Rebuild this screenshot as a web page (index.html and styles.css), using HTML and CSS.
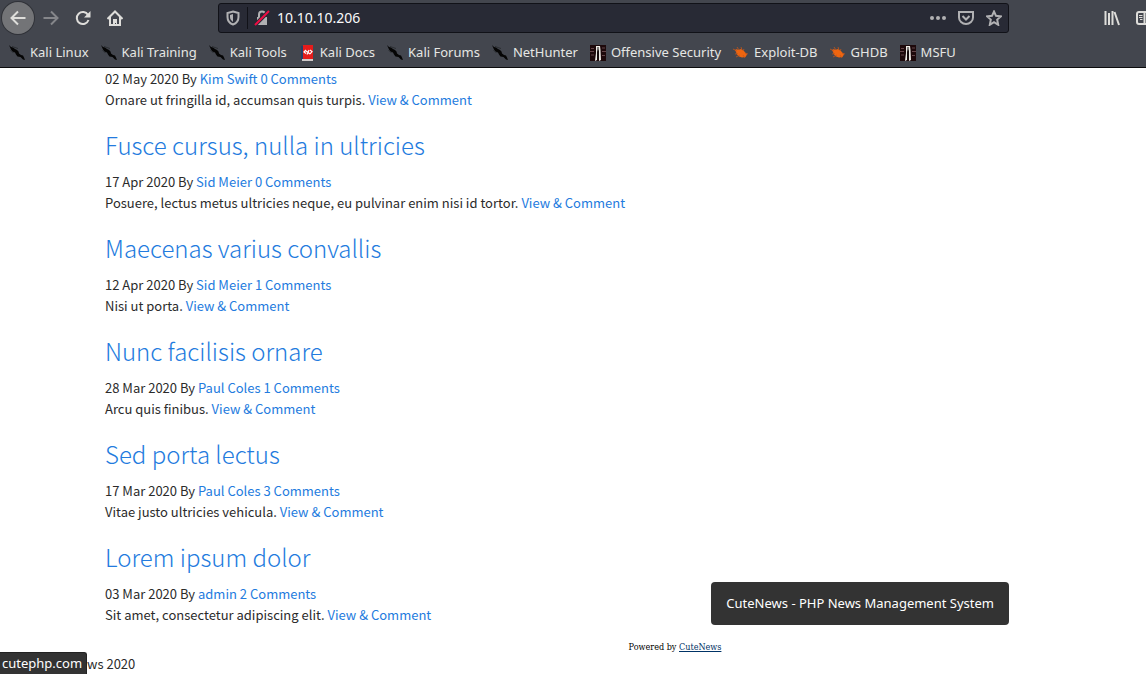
FILE: index.html
```
<!DOCTYPE html>
<html lang="en">
<head>
<meta charset="utf-8">
<title>CuteNews</title>
<link rel="stylesheet" href="styles.css">
</head>
<body>
<svg class="defs" aria-hidden="true">
  <symbol id="kali" viewBox="0 0 16 16"><path fill="#050505" d="M0 0l2 2 2 .5 2 1.500 2 1 1.500 1.500.5 2 2 1.500 2 .5 1 2 1 2.500-2-.5-2.500-2.500-3-.5L7 9.500 6 7.500 3.500 6.500 2 4.500z"/><path stroke="#26282c" stroke-width=".8" d="M3 1.500l6 2M1.500 5l3 3"/></symbol>
  <symbol id="offsec" viewBox="0 0 16 16"><path fill="#1d090b" d="M0 0h16v16H0z"/><path stroke="#65464a" stroke-width="1" d="M1 3.500h3M0 6.500h4M1 10h3M12 3h3M12 6.500h4M12 10.500h3"/><path fill="#eeeae5" d="M6 1h4l.5 4 .5 10-2 1V6L8 4 7 7v8l-2 1 1-8z"/><path fill="#111" d="M7.500 2h1v12h-1z"/></symbol>
  <symbol id="bug" viewBox="0 0 16 16"><path fill="#ee6510" d="M2 5l2-1 1 1 3-1 3 2 1.500 2L14 9.500 12.500 12 9 12.500 6 11.500 4 9.500 3 7z"/><path stroke="#c75719" stroke-width=".8" d="M0 4l4 2M4 2l2 3M8 2l1 3M2 9l3-.5M3 12l4-2M12 13l-2-3M11 4l-1 2M12 8l3 1"/></symbol>
</svg>
<header class="chrome">
  <nav class="toolbar" aria-label="Navigation">
    <div class="tools">
      <button class="tool back" aria-label="Back"><svg viewBox="0 0 16 16"><path d="M15.500 8H1.500M8 1.500L1.500 8 8 14.500"/></svg></button>
      <button class="tool dim" aria-label="Forward"><svg viewBox="0 0 16 16"><path d="M.5 8h14M8 1.500L14.500 8 8 14.500"/></svg></button>
      <button class="tool" aria-label="Reload"><svg viewBox="0 0 16 16"><path d="M13 5A6 6 0 1 0 13.500 10"/><path class="solid" d="M15.500 1v6.500H9z"/></svg></button>
      <button class="tool" aria-label="Home"><svg viewBox="0 0 16 16"><path d="M.5 9L8 1.500 15.500 9M3 7v8h10V7"/><path class="solid" d="M6 9h4v6H9v-2H8v2H6z"/></svg></button>
    </div>
    <div class="urlbar">
      <button class="mini shield" aria-label="Tracking protection"><svg viewBox="0 0 16 16"><path d="M8 1.500l5.500 1.500v4c0 4-2.500 6.500-5.500 7.500-3-1-5.500-3.500-5.500-7.500V3z"/><path class="solid" d="M8 4v8C6 10.500 5 9 5 7V5z"/></svg></button>
      <button class="mini" aria-label="Connection not secure"><svg viewBox="0 0 16 16"><path d="M5 8V4.500a3 3 0 0 1 6 0V8"/><path class="solid" d="M3 7h10v8H3z"/><path class="gap" d="M1 15L15 1"/><path class="slash" d="M1 15L15 1"/></svg></button>
      <input class="address" type="text" aria-label="Address" value="10.10.10.206">
      <button class="mini" aria-label="Page actions"><svg viewBox="0 0 16 16"><circle class="solid" cx="2" cy="8" r="2"/><circle class="solid" cx="8" cy="8" r="2"/><circle class="solid" cx="14" cy="8" r="2"/></svg></button>
      <button class="mini" aria-label="Save to Pocket"><svg viewBox="0 0 16 16"><path d="M1 2h14v5.500a7 6.500 0 0 1-14 0zM4.500 6L8 9.500 11.500 6"/></svg></button>
      <button class="mini" aria-label="Bookmark"><svg viewBox="0 0 16 16"><path d="M8 1.500l2 4.300 5 .6-3.800 3.200 1 5.200L8 12.200l-4.200 2.600 1-5.200L1 6.400l5-.6z"/></svg></button>
    </div>
    <div class="tools end">
      <button class="plain" aria-label="Library"><svg viewBox="0 0 16 16"><path d="M1.500 1v14M5 3v12M8.500 1v14M10.500 2l4.500 13"/></svg></button>
      <button class="plain" aria-label="Sidebars"><svg viewBox="0 0 16 16"><path d="M3 2h12v12H3a2 2 0 0 1-2-2V4a2 2 0 0 1 2-2zM8.500 2v12"/><path class="thin" d="M3 5.500h3.500M3 7.500h3.500M4 9.500h2.500"/></svg></button>
    </div>
  </nav>
  <nav class="bookmarks" aria-label="Bookmarks">
    <a href="#"><svg><use href="#kali"/></svg>Kali Linux</a>
    <a href="#"><svg><use href="#kali"/></svg>Kali Training</a>
    <a href="#"><svg><use href="#kali"/></svg>Kali Tools</a>
    <a href="#"><svg viewBox="0 0 16 16"><path fill="#253f67" d="M2 1h3v14H2z"/><path fill="#e51c1b" d="M4 0h10v14H4z"/><path fill="#d0caca" d="M3 14h11v2H3z"/><path fill="none" stroke="#fff" stroke-width="1.200" d="M7 5L5 7l2 1.500M8 9.500L10 5M11 5l2 1.500L11 9M7 6l4 3"/></svg>Kali Docs</a>
    <a href="#"><svg><use href="#kali"/></svg>Kali Forums</a>
    <a href="#"><svg><use href="#kali"/></svg>NetHunter</a>
    <a href="#"><svg><use href="#offsec"/></svg>Offensive Security</a>
    <a href="#"><svg><use href="#bug"/></svg>Exploit-DB</a>
    <a href="#"><svg><use href="#bug"/></svg>GHDB</a>
    <a href="#"><svg><use href="#offsec"/></svg>MSFU</a>
  </nav>
</header>
<main class="news">
  <article>
    <p>02 May 2020 By <a href="#">Kim Swift</a> <a href="#">0 Comments</a></p>
    <p>Ornare ut fringilla id, accumsan quis turpis. <a href="#">View &amp; Comment</a></p>
  </article>
  <article>
    <h2><a href="#">Fusce cursus, nulla in ultricies</a></h2>
    <p>17 Apr 2020 By <a href="#">Sid Meier</a> <a href="#">0 Comments</a></p>
    <p>Posuere, lectus metus ultricies neque, eu pulvinar enim nisi id tortor. <a href="#">View &amp; Comment</a></p>
  </article>
  <article>
    <h2><a href="#">Maecenas varius convallis</a></h2>
    <p>12 Apr 2020 By <a href="#">Sid Meier</a> <a href="#">1 Comments</a></p>
    <p>Nisi ut porta. <a href="#">View &amp; Comment</a></p>
  </article>
  <article>
    <h2><a href="#">Nunc facilisis ornare</a></h2>
    <p>28 Mar 2020 By <a href="#">Paul Coles</a> <a href="#">1 Comments</a></p>
    <p>Arcu quis finibus. <a href="#">View &amp; Comment</a></p>
  </article>
  <article>
    <h2><a href="#">Sed porta lectus</a></h2>
    <p>17 Mar 2020 By <a href="#">Paul Coles</a> <a href="#">3 Comments</a></p>
    <p>Vitae justo ultricies vehicula. <a href="#">View &amp; Comment</a></p>
  </article>
  <article>
    <h2><a href="#">Lorem ipsum dolor</a></h2>
    <p>03 Mar 2020 By <a href="#">admin</a> <a href="#">2 Comments</a></p>
    <p>Sit amet, consectetur adipiscing elit. <a href="#">View &amp; Comment</a></p>
  </article>
</main>
<p class="powered">Powered by <a href="#">CuteNews</a></p>
<footer class="footer"><p>ws 2020</p></footer>
<div class="tooltip" role="tooltip">CuteNews - PHP News Management System</div>
<div class="status">cutephp.com</div>
</body>
</html>
```
FILE: styles.css
```
* { box-sizing: border-box; }
body {
  margin: 0;
  min-height: 100vh;
  overflow: hidden;
  background: #fff;
  color: #2b2b2b;
  font: 13px/21px "Noto Sans CJK SC", sans-serif;
}
p, h2 { margin: 0; }
.defs { display: none; }
button { padding: 0; border: 0; background: none; color: inherit; }
svg { display: block; width: 16px; height: 16px; flex: none; }
button path { fill: none; stroke: currentColor; stroke-width: 2; }
button .gap { stroke: #282a35; stroke-width: 4; }
button .slash { stroke: #f00c43; }
button .thin { stroke-width: 1; }
button .solid { fill: currentColor; stroke: none; }

.chrome {
  height: 68px;
  background: #43464e;
  border-bottom: 1px solid #0c0c0d;
  color: #e6e6e4;
  font-family: "Noto Sans", sans-serif;
}
.toolbar { display: flex; align-items: center; height: 36px; }
.tools { display: flex; flex: none; width: 131px; padding-left: 2px; color: #deddda; }
.tool { display: grid; place-items: center; width: 32px; height: 32px; border-radius: 50%; }
.tool + .tool { margin-left: 1px; margin-right: -1px; }
.back { background: #737477; box-shadow: 0 0 0 1px #303238; }
.dim { color: #85868a; }
.urlbar {
  display: flex;
  flex: 1;
  align-items: center;
  height: 30px;
  margin: 0 95px 0 87px;
  padding: 0 0 0 6px;
  background: #282a35;
  border: 1px solid #111218;
  border-radius: 3px;
  color: #b1b1b3;
}
.mini { display: grid; place-items: center; width: 28px; height: 22px; }
.shield { width: 23px; padding-right: 7px; border-right: 1px solid #111218; }
.address {
  flex: 1;
  min-width: 0;
  padding: 0 0 0 1px;
  border: 0;
  outline: 0;
  background: none;
  color: #f9f9fa;
  font: 14px/20px "Noto Sans", sans-serif;
}
.end { gap: 16px; width: 42px; padding: 0; overflow: hidden; }
.plain { flex: none; }
.bookmarks { display: flex; gap: 12px; height: 33px; padding: 0 9px; align-items: center; }
.bookmarks a {
  display: flex;
  align-items: center;
  gap: 5px;
  color: inherit;
  text-decoration: none;
  white-space: nowrap;
}

.news { padding: 0 0 0 105px; }
.news a { color: #237bde; text-decoration: none; }
.news h2 { padding: 17px 0 8px; font-size: 24px; line-height: 36px; font-weight: 300; }
.powered {
  margin: 12px 0 0 204px;
  text-align: center;
  color: #000;
  font: 9px/20px "DejaVu Serif Condensed", "DejaVu Serif", serif;
}
.powered a { color: #036; }
.footer { padding-left: 87px; margin-top: -4px; }

.tooltip {
  position: absolute;
  right: 137px;
  bottom: 49px;
  padding: 11px 15px;
  background: #333;
  border-radius: 4px;
  color: #fff;
  font-family: "Noto Sans", sans-serif;
}
.status {
  position: fixed;
  left: 0;
  bottom: 0;
  padding: 0 4px 0 2px;
  background: #333;
  border: 1px solid #222;
  border-width: 1px 1px 0 0;
  border-radius: 0 3px 0 0;
  color: #fff;
  font-family: "Noto Sans", sans-serif;
}
```
